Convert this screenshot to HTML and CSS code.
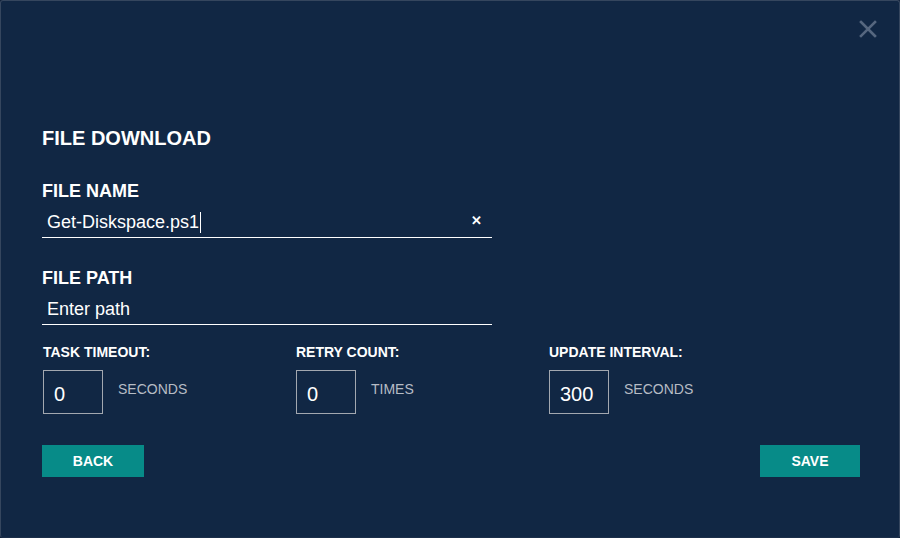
FILE: index.html
```html
<!DOCTYPE html>
<html lang="en">
<head>
  <meta charset="UTF-8">
  <title>File Download</title>
  <link rel="stylesheet" href="styles.css">
</head>
<body>

  <div class="dialog">
    <div class="dialog-top">
      <button class="close" aria-label="Close">
        <svg width="18" height="18" viewBox="0 0 18 18"><path d="M2 2L16 16M16 2L2 16" stroke="#56677f" stroke-width="2.6" stroke-linecap="square"/></svg>
      </button>
    </div>

    <div class="content">
      <h1>FILE DOWNLOAD</h1>

      <label class="field-label" for="fileName">FILE NAME</label>
      <div class="line-input">
        <input type="text" id="fileName" value="Get-Diskspace.ps1" />
        <span class="caret"></span>
        <span class="clear">&#x2715;</span>
      </div>

      <label class="field-label" for="filePath">FILE PATH</label>
      <div class="line-input">
        <input type="text" id="filePath" placeholder="Enter path" />
      </div>

      <div class="options">
        <div class="option">
          <div class="option-label">TASK TIMEOUT:</div>
          <div class="option-row">
            <input class="num" type="text" value="0" />
            <span class="unit">SECONDS</span>
          </div>
        </div>
        <div class="option">
          <div class="option-label">RETRY COUNT:</div>
          <div class="option-row">
            <input class="num" type="text" value="0" />
            <span class="unit">TIMES</span>
          </div>
        </div>
        <div class="option">
          <div class="option-label">UPDATE INTERVAL:</div>
          <div class="option-row">
            <input class="num" type="text" value="300" />
            <span class="unit">SECONDS</span>
          </div>
        </div>
      </div>

      <div class="actions">
        <button class="btn">BACK</button>
        <button class="btn">SAVE</button>
      </div>
    </div>
  </div>

</body>
</html>
```

FILE: styles.css
```css
html, body {
  margin: 0;
  height: 100%;
}
body {
  font-family: "Liberation Sans", Arial, sans-serif;
  background: #0f2039;
  color: white;
}
.dialog {
  box-sizing: border-box;
  height: 538px;
  background: #112744;
  border: 1px solid #35465e;
  border-bottom-color: #1c2f4a;
  border-radius: 3px;
}
.dialog-top {
  display: flex;
  justify-content: flex-end;
  padding: 19px 22px 0 0;
  height: 126px;
  box-sizing: border-box;
}
.close {
  background: none;
  border: none;
  padding: 0;
  width: 18px;
  height: 18px;
  cursor: pointer;
}
.content {
  padding: 0 39px 0 41px;
}
h1 {
  margin: 0 0 32px;
  font-size: 20px;
  font-weight: bold;
  line-height: 23px;
}
.field-label {
  display: block;
  font-size: 18px;
  font-weight: bold;
  line-height: 18px;
}
.line-input {
  position: relative;
  width: 450px;
  margin-top: 6px;
  margin-bottom: 31px;
  border-bottom: 1px solid #ffffff;
  display: flex;
  align-items: center;
}
.line-input input {
  box-sizing: border-box;
  background: transparent;
  border: none;
  outline: none;
  color: white;
  font-family: inherit;
  font-size: 18px;
  height: 31px;
  padding: 2px 0 0 5px;
  width: 420px;
}
.line-input input::placeholder {
  color: white;
}
.caret {
  position: absolute;
  left: 158px;
  top: 6px;
  width: 1px;
  height: 21px;
  background: white;
}
.clear {
  position: absolute;
  right: 10px;
  top: 7px;
  font-size: 13px;
  font-weight: bold;
}
.options {
  display: flex;
  margin-top: -11px;
}
.option {
  width: 252px;
  padding-left: 1px;
}
.option-label {
  font-size: 14px;
  font-weight: bold;
  line-height: 15px;
}
.option-row {
  display: flex;
  align-items: flex-start;
  margin-top: 10px;
}
.num {
  box-sizing: border-box;
  width: 60px;
  height: 44px;
  background: transparent;
  border: 1px solid #a3a8b0;
  color: white;
  font-family: inherit;
  font-size: 20px;
  padding: 5px 0 0 10px;
  outline: none;
}
.unit {
  margin: 11px 0 0 15px;
  font-size: 14px;
  color: #b6bcc5;
}
.actions {
  display: flex;
  justify-content: space-between;
  margin-top: 31px;
}
.btn {
  width: 102px;
  height: 32px;
  background: #078b88;
  color: white;
  border: none;
  font-family: inherit;
  font-size: 14px;
  font-weight: bold;
  cursor: pointer;
}
.btn:last-child {
  width: 100px;
}
```
